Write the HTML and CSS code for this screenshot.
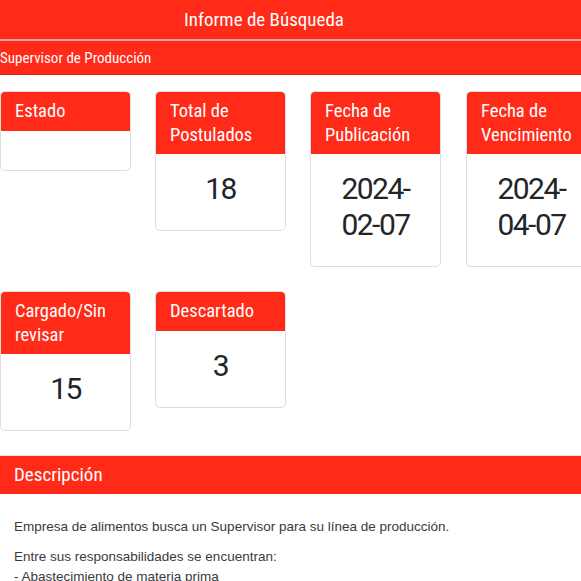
FILE: index.html
```html
<!DOCTYPE html>
<html lang="es">
<head>
<meta charset="utf-8">
<title>Informe de Búsqueda</title>
<link rel="stylesheet" href="styles.css">
</head>
<body>
<div class="page">
  <header class="topbar">
    <h1 class="title">Informe de Búsqueda</h1>
  </header>
  <div class="subbar">Supervisor de Producción</div>

  <section class="cards">
    <div class="card">
      <div class="card-head">Estado</div>
      <div class="card-body card-body--empty"></div>
    </div>
    <div class="card">
      <div class="card-head">Total de Postulados</div>
      <div class="card-body">18</div>
    </div>
    <div class="card">
      <div class="card-head">Fecha de Publicación</div>
      <div class="card-body">2024-<br>02-07</div>
    </div>
    <div class="card">
      <div class="card-head">Fecha de Vencimiento</div>
      <div class="card-body">2024-<br>04-07</div>
    </div>
    <div class="card">
      <div class="card-head">Cargado/Sin revisar</div>
      <div class="card-body">15</div>
    </div>
    <div class="card">
      <div class="card-head">Descartado</div>
      <div class="card-body">3</div>
    </div>
  </section>

  <section class="desc">
    <h2 class="desc-head">Descripción</h2>
    <div class="desc-body">
      <p>Empresa de alimentos busca un Supervisor para su línea de producción.</p>
      <p>Entre sus responsabilidades se encuentran:<br>- Abastecimiento de materia prima<br>- Control de calidad</p>
    </div>
  </section>
</div>
</body>
</html>
```

FILE: styles.css
```css
html, body {
  margin: 0;
  padding: 0;
  background: #ffffff;
  overflow: hidden;
}

.page {
  width: 640px;
  font-family: "Roboto Condensed", "Liberation Sans Narrow", "Arial Narrow", sans-serif;
}

.topbar {
  background: #ff2a18;
  height: 39px;
  border-bottom: 2px solid #e9a59c;
  width: 581px;
}

.title {
  margin: 0;
  width: 528px;
  text-align: center;
  color: #ffffff;
  font-weight: 400;
  font-size: 19px;
  line-height: 40px;
}

.subbar {
  background: #ff2a18;
  color: #ffffff;
  font-size: 15px;
  height: 33px;
  line-height: 34px;
  border-bottom: 1px solid #d8261a;
}

.cards {
  display: flex;
  flex-wrap: wrap;
  align-items: flex-start;
  column-gap: 24px;
  row-gap: 24px;
  padding: 16px 0 0 0;
  width: 620px;
}

.card {
  width: 129px;
  border: 1px solid #dedede;
  border-radius: 5px;
  overflow: hidden;
  background: #ffffff;
}

.card:nth-child(4) {
  margin-left: 1px;
}

.card-head {
  background: #ff2a18;
  color: #ffffff;
  font-size: 18.5px;
  line-height: 23.5px;
  padding: 8px 14px 7px 14px;
}

.card-body {
  text-align: center;
  color: #212529;
  font-family: "Roboto", "Liberation Sans", sans-serif;
  font-size: 30px;
  letter-spacing: -1.5px;
  line-height: 36px;
  padding: 17px 0 23px 0;
}

.card-body--empty {
  padding: 0;
  height: 39px;
}

.desc {
  margin-top: 25px;
  width: 620px;
}

.desc-head {
  margin: 0;
  background: #ff2a18;
  color: #ffffff;
  font-weight: 400;
  font-size: 19px;
  height: 38px;
  line-height: 38px;
  padding-left: 14px;
  box-shadow: 0 -1px 0 #e6e6e6;
}

.desc-body {
  padding: 23px 14px 0 14px;
  font-family: "Liberation Sans", Arial, sans-serif;
  font-size: 13.5px;
  line-height: 20px;
  color: #3a3a3a;
}

.desc-body p {
  margin: 0 0 10px 0;
}
```
